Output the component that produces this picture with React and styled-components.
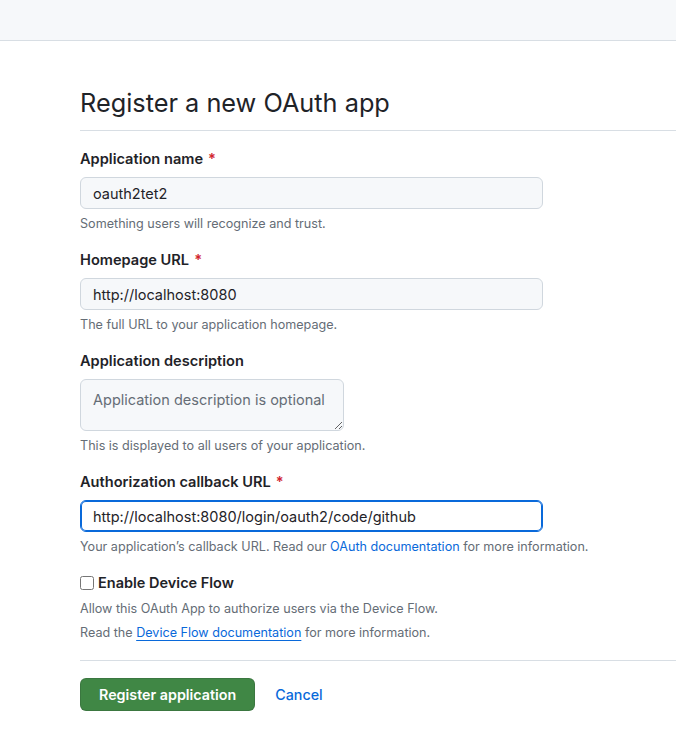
import React from 'react'
import styled, { createGlobalStyle } from 'styled-components'

const GlobalStyle = createGlobalStyle`
  html, body {
    margin: 0;
    padding: 0;
    background: #ffffff;
    overflow: hidden;
  }
  body {
    font-family: Inter, "Liberation Sans", sans-serif;
    color: #1f2328;
    -webkit-font-smoothing: antialiased;
  }
`

const Header = styled.div`
  height: 40px;
  background: #f6f8fa;
  border-bottom: 1px solid #d8dee4;
`

const Main = styled.main`
  padding: 47px 0 0 80px;
`

const Title = styled.h1`
  margin: 0;
  padding-bottom: 12px;
  border-bottom: 1px solid #d8dee4;
  font-size: 25.3px;
  line-height: 30px;
  font-weight: 400;
  color: #1f2328;
`

const Form = styled.form`
  padding-top: 18px;
`

const FormGroup = styled.div`
  margin-bottom: 17px;
`

const Label = styled.label`
  display: block;
  font-size: 14.6px;
  line-height: 20px;
  font-weight: 600;
  margin-bottom: 8px;
`

const Required = styled.span`
  color: #d1242f;
  margin-left: 5px;
`

const Input = styled.input`
  display: block;
  box-sizing: border-box;
  width: 463px;
  height: 32px;
  padding: 0 12px;
  font-family: inherit;
  font-size: 14.5px;
  color: #1f2328;
  background: ${p => (p.$focused ? '#ffffff' : '#f6f8fa')};
  border: 1px solid ${p => (p.$focused ? '#0969da' : '#d0d7de')};
  box-shadow: ${p => (p.$focused ? 'inset 0 0 0 1px #0969da' : 'none')};
  border-radius: 6px;
  outline: none;
`

const TextArea = styled.textarea`
  display: block;
  box-sizing: border-box;
  width: 264px;
  height: 52px;
  padding: 10px 12px;
  font-family: inherit;
  font-size: 14.5px;
  line-height: 20px;
  color: #1f2328;
  background: #f6f8fa;
  border: 1px solid #d0d7de;
  border-radius: 6px;
  outline: none;
  resize: both;

  &::placeholder {
    color: #656d76;
  }
`

const Note = styled.p`
  margin: 6px 0 0;
  font-size: 12.6px;
  line-height: 18px;
  color: #656d76;
`

const Link = styled.a`
  color: #0969da;
  text-decoration: ${p => (p.$underline ? 'underline' : 'none')};
  text-underline-offset: 3px;
  text-decoration-thickness: 1px;
`

const CheckRow = styled.label`
  display: flex;
  align-items: center;
  font-size: 14.5px;
  line-height: 20px;
  font-weight: 600;
`

const CheckBox = styled.input`
  width: 14px;
  height: 14px;
  margin: 0 4px 0 0;
`

const CheckNotes = styled.div`
  display: flex;
  flex-direction: column;
  gap: 6px;
  margin-top: 7px;

  & > p {
    margin: 0;
  }
`

const Divider = styled.hr`
  margin: 18px 0 17px;
  border: 0;
  border-top: 1px solid #d8dee4;
`

const Actions = styled.div`
  display: flex;
  align-items: center;
  gap: 20px;
`

const PrimaryButton = styled.button`
  height: 33px;
  padding: 0 18px;
  font-family: inherit;
  font-size: 14.3px;
  font-weight: 600;
  color: #ffffff;
  background: #408745;
  border: 1px solid rgba(31, 35, 40, 0.15);
  border-radius: 6px;
`

const CancelLink = styled.a`
  font-size: 14.3px;
  font-weight: 500;
  color: #0969da;
  text-decoration: none;
`

export default function App () {
  return (
    <>
      <GlobalStyle/>
      <Header/>
      <Main>
        <Title>Register a new OAuth app</Title>
        <Form onSubmit={e => e.preventDefault()}>
          <FormGroup>
            <Label>Application name<Required>*</Required></Label>
            <Input defaultValue="oauth2tet2"/>
            <Note>Something users will recognize and trust.</Note>
          </FormGroup>

          <FormGroup>
            <Label>Homepage URL<Required>*</Required></Label>
            <Input defaultValue="http://localhost:8080"/>
            <Note>The full URL to your application homepage.</Note>
          </FormGroup>

          <FormGroup>
            <Label>Application description</Label>
            <TextArea placeholder="Application description is optional"/>
            <Note>This is displayed to all users of your application.</Note>
          </FormGroup>

          <FormGroup>
            <Label>Authorization callback URL<Required>*</Required></Label>
            <Input $focused defaultValue="http://localhost:8080/login/oauth2/code/github"/>
            <Note>
              Your application’s callback URL. Read our <Link href="#">OAuth documentation</Link> for more information.
            </Note>
          </FormGroup>

          <CheckRow>
            <CheckBox type="checkbox"/>
            Enable Device Flow
          </CheckRow>
          <CheckNotes>
            <Note>Allow this OAuth App to authorize users via the Device Flow.</Note>
            <Note>
              Read the <Link href="#" $underline>Device Flow documentation</Link> for more information.
            </Note>
          </CheckNotes>

          <Divider/>

          <Actions>
            <PrimaryButton type="submit">Register application</PrimaryButton>
            <CancelLink href="#">Cancel</CancelLink>
          </Actions>
        </Form>
      </Main>
    </>
  )
}
